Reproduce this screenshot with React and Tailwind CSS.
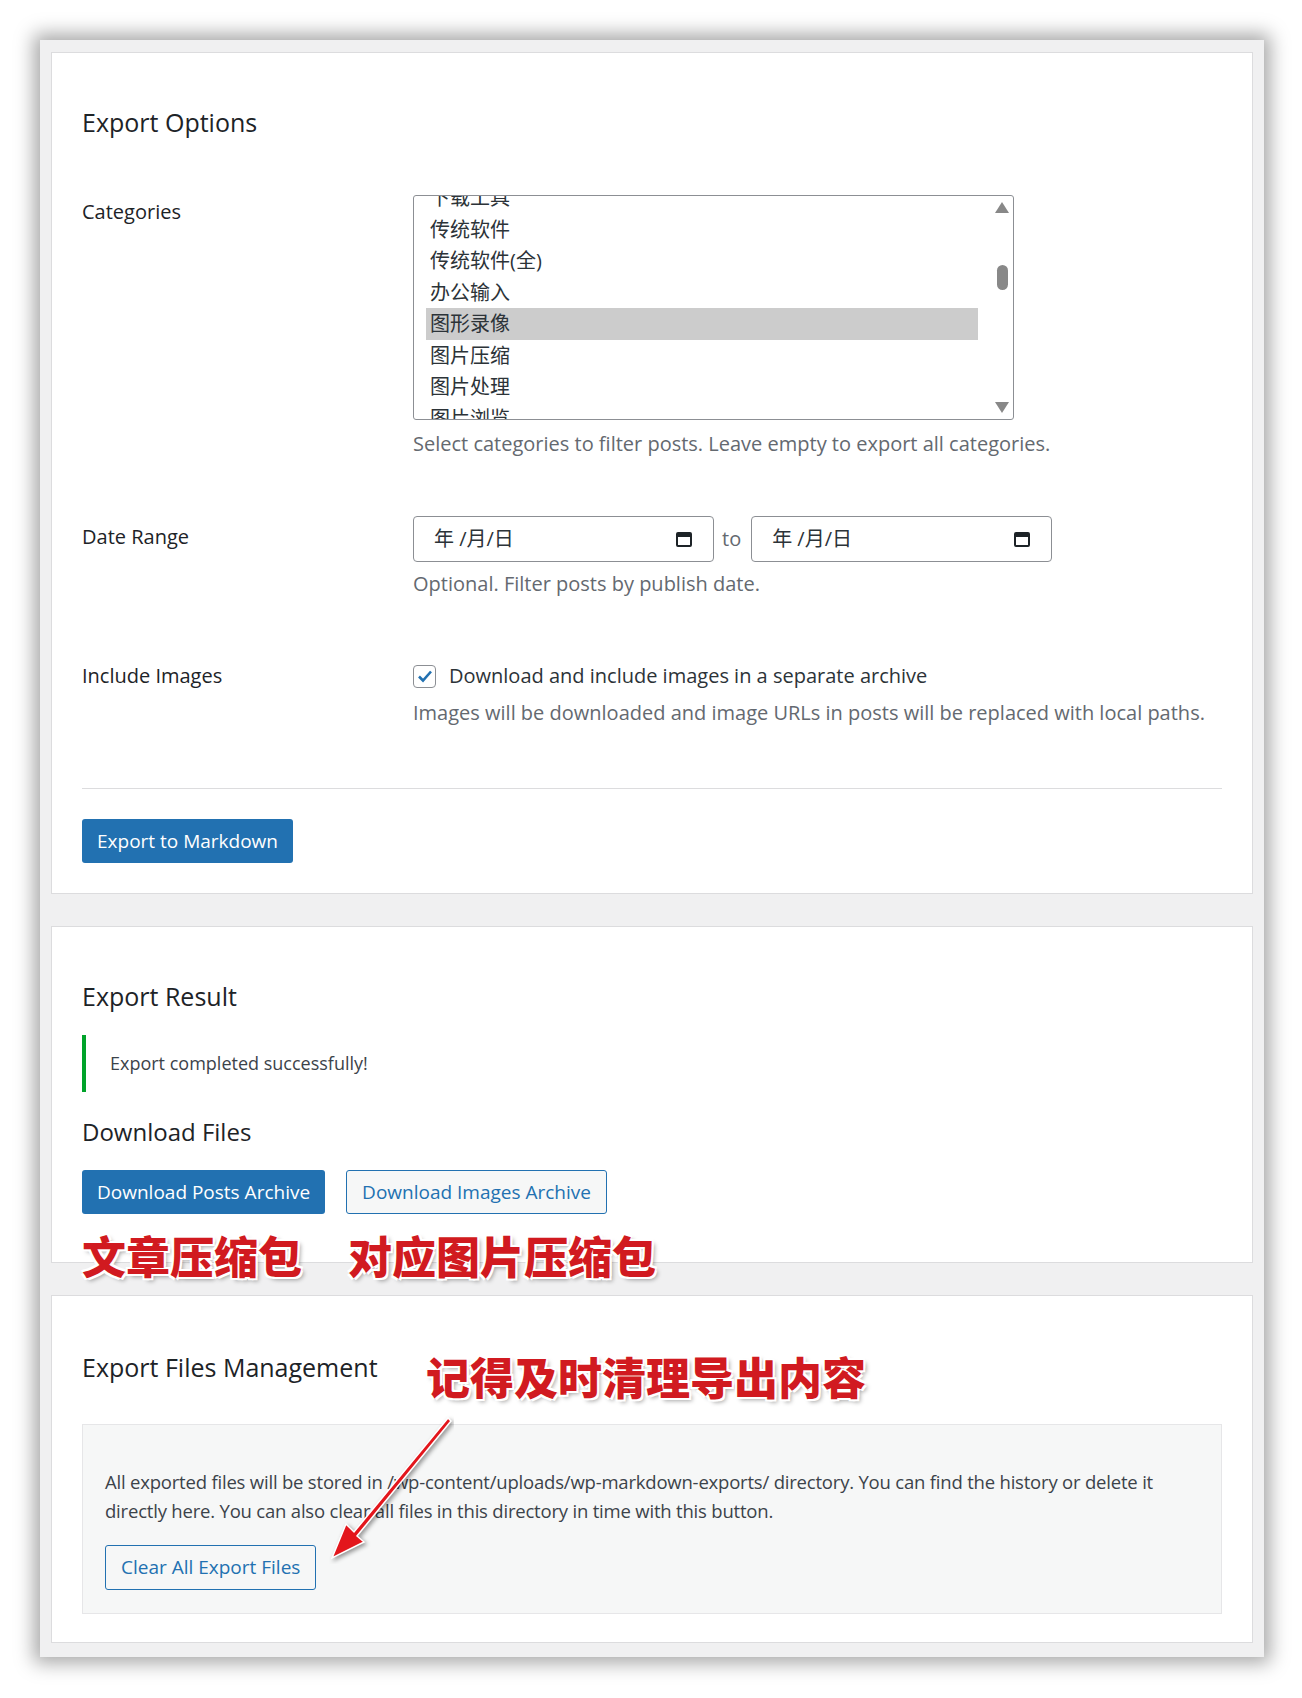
import React from "react";

const F = { fontFamily: '"Open Sans","Noto Sans","Noto Sans CJK SC",sans-serif' };
const red = {
  fontFamily: '"Noto Sans CJK SC",sans-serif',
  textShadow: "2px 2px 0 #fff,-2px -2px 0 #fff,2px -2px 0 #fff,-2px 2px 0 #fff,3px 3px 4px rgba(0,0,0,0.35)",
};

const cats = ["下载工具", "传统软件", "传统软件(全)", "办公输入", "图形录像", "图片压缩", "图片处理", "图片浏览"];

function DateInput() {
  return (
    <div className="w-[301px] h-[46px] border border-[#8c8f94] rounded-[4px] flex items-center justify-between px-[20px] text-[20px] text-[#2c3338] bg-white">
      <span>年 /月/日</span>
      <svg width="18" height="18" viewBox="0 0 18 18"><rect x="2" y="3" width="14" height="13" rx="1" fill="none" stroke="#1d2327" strokeWidth="2"/><rect x="2" y="3" width="14" height="4" fill="#1d2327"/></svg>
    </div>
  );
}

export default function App() {
  return (
    <div className="bg-white p-[40px] pr-[38px]" style={F}>
      <div className="bg-[#f0f0f1] px-[11px] pt-[12px] pb-[14px] flex flex-col gap-[32px] shadow-[0_0_18px_6px_rgba(0,0,0,0.35)]">
        {/* Card 1 */}
        <div className="bg-white border border-[#dcdcde] px-[30px] pt-[52px] pb-[30px] text-[#1d2327]">
          <h2 className="text-[25px] leading-[34px]">Export Options</h2>
          <div className="flex mt-[56px]">
            <div className="w-[331px] text-[20px] pt-[2px]">Categories</div>
            <div>
              <div className="relative w-[601px] h-[225px] border border-[#8c8f94] rounded-[3px] overflow-hidden">
                <div className="-mt-[14px] pl-[12px] pr-[35px] text-[20px] leading-[31.5px] text-[#2c3338]">
                  {cats.map((c, i) => (
                    <div key={c} className={"pl-[4px] " + (i === 4 ? "bg-[#cccccc]" : "")}>{c}</div>
                  ))}
                </div>
                <div className="absolute right-[3px] top-0 h-full w-[16px] flex flex-col items-center">
                  <div className="mt-[6px] w-0 h-0 border-l-[7px] border-r-[7px] border-b-[11px] border-l-transparent border-r-transparent border-b-[#888]" />
                  <div className="mt-[52px] w-[11px] h-[25px] rounded-full bg-[#888]" />
                  <div className="mt-auto mb-[6px] w-0 h-0 border-l-[7px] border-r-[7px] border-t-[11px] border-l-transparent border-r-transparent border-t-[#888]" />
                </div>
              </div>
              <p className="text-[20px] text-[#646970] mt-[9px]">Select categories to filter posts. Leave empty to export all categories.</p>
            </div>
          </div>
          <div className="flex mt-[57px]">
            <div className="w-[331px] text-[20px] pt-[6px]">Date Range</div>
            <div>
              <div className="flex items-center gap-[8px]">
                <DateInput />
                <span className="text-[20px] text-[#646970] mr-[2px]">to</span>
                <DateInput />
              </div>
              <p className="text-[20px] text-[#646970] mt-[7px]">Optional. Filter posts by publish date.</p>
            </div>
          </div>
          <div className="flex mt-[62px]">
            <div className="w-[331px] text-[20px]">Include Images</div>
            <div>
              <div className="flex items-center gap-[13px] text-[20px] text-[#2c3338]">
                <span className="w-[23px] h-[23px] border border-[#8c8f94] rounded-[4px] flex items-center justify-center">
                  <svg width="18" height="18" viewBox="0 0 18 18"><path d="M3 9.5l4 4 8-9" fill="none" stroke="#2271b1" strokeWidth="2.6"/></svg>
                </span>
                Download and include images in a separate archive
              </div>
              <p className="text-[20px] text-[#646970] mt-[7px]">Images will be downloaded and image URLs in posts will be replaced with local paths.</p>
            </div>
          </div>
          <hr className="border-[#dcdcde] mt-[60px]" />
          <button className="mt-[30px] h-[44px] px-[15px] bg-[#2271b1] text-white text-[19px] rounded-[3px]">Export to Markdown</button>
        </div>

        {/* Card 2 */}
        <div className="relative bg-white border border-[#dcdcde] px-[30px] pt-[52px] pb-[48px] text-[#1d2327]">
          <h2 className="text-[25px] leading-[34px]">Export Result</h2>
          <div className="mt-[22px] border-l-[4px] border-[#00a32a] h-[57px] flex items-center pl-[24px] text-[18px] text-[#3c434a]">Export completed successfully!</div>
          <h3 className="text-[24px] leading-[34px] mt-[23px]">Download Files</h3>
          <div className="flex gap-[21px] mt-[21px]">
            <button className="h-[44px] px-[15px] bg-[#2271b1] text-white text-[19px] rounded-[3px]">Download Posts Archive</button>
            <button className="h-[44px] px-[15px] bg-[#f6f7f7] border border-[#2271b1] text-[#2271b1] text-[19px] rounded-[3px]">Download Images Archive</button>
          </div>
          <div className="absolute left-[30px] top-[306px] flex gap-[46px] text-[44px] font-black text-[#d11a20] leading-none" style={red}>
            <span>文章压缩包</span><span>对应图片压缩包</span>
          </div>
        </div>

        {/* Card 3 */}
        <div className="relative bg-white border border-[#dcdcde] px-[30px] pt-[54px] pb-[28px] text-[#1d2327]">
          <h2 className="text-[25px] leading-[34px]">Export Files Management</h2>
          <div className="absolute left-[374px] top-[58px] text-[44px] font-black text-[#d11a20] leading-none" style={red}>记得及时清理导出内容</div>
          <div className="mt-[40px] bg-[#f6f7f7] border border-[#e6e6e8] px-[22px] pt-[42px] pb-[23px]">
            <p className="text-[18.5px] leading-[29px] text-[#3c434a] tracking-[-0.2px]">All exported files will be stored in /wp-content/uploads/wp-markdown-exports/ directory. You can find the history or delete it directly here. You can also clear all files in this directory in time with this button.</p>
            <button className="mt-[20px] h-[45px] px-[15px] bg-[#f6f7f7] border border-[#2271b1] text-[#2271b1] text-[19px] rounded-[3px]">Clear All Export Files</button>
          </div>
          <svg className="absolute left-[272px] top-[118px]" width="130" height="150" viewBox="0 0 130 150">
            <path d="M124 4 L30 118 L22 110 L8 144 L40 128 L33 122 L127 7 Z" fill="#e3161c" stroke="#fff" strokeWidth="1.5" style={{filter:"drop-shadow(2px 2px 2px rgba(0,0,0,.4))"}}/>
          </svg>
        </div>
      </div>
    </div>
  );
}
